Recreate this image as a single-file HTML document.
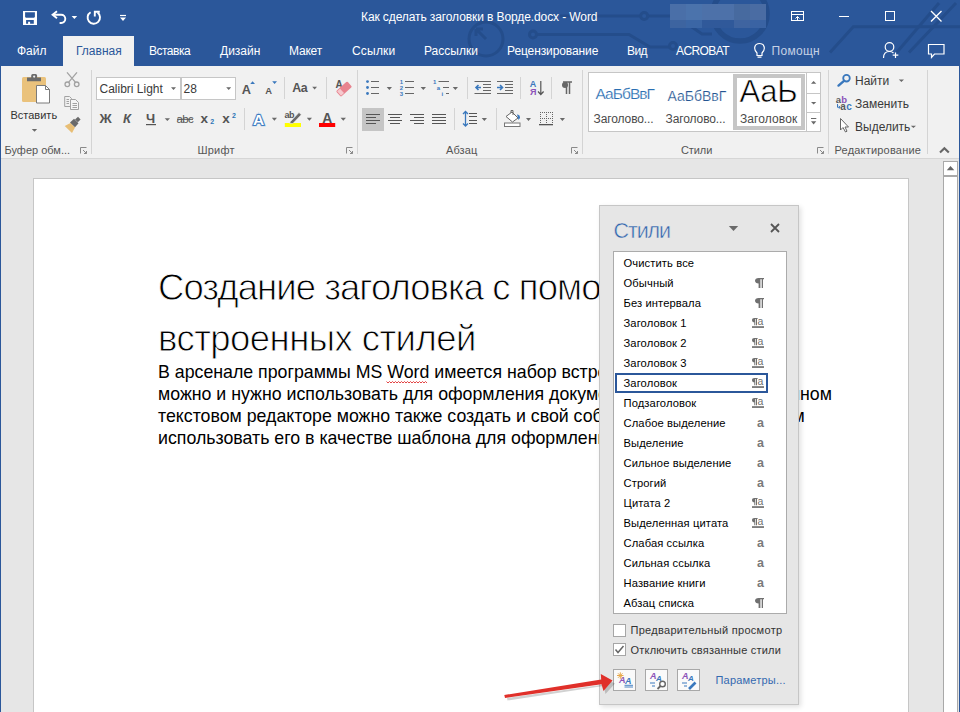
<!DOCTYPE html>
<html><head><meta charset="utf-8">
<style>
*{margin:0;padding:0;box-sizing:border-box}
html,body{width:960px;height:712px;overflow:hidden;background:#e6e6e6;font-family:"Liberation Sans",sans-serif}
.a{position:absolute;white-space:nowrap;line-height:1}
svg{position:absolute;overflow:visible}
.tab{color:#fff;font-size:12px;top:45px}
.lbl{color:#555;font-size:11px;top:144px}
.rt{color:#3a3a3a;font-size:12px}
.it{left:623.5px;font-size:11.2px;color:#000;letter-spacing:0.1px}
</style></head><body>
<!-- title + tabs background -->
<div class="a" style="left:0;top:0;width:960px;height:66px;background:#2b579a"></div>
<svg style="left:0;top:0" width="960" height="66" viewBox="0 0 960 66">
 <g fill="none" stroke="#244d8b" stroke-width="3">
  <circle cx="486" cy="39" r="17"/>
  <path d="M486 39 L476 29 M476 29 h7 M476 29 v7"/>
  <path d="M536.5 34.5 H629 L650 47 H669.5"/>
  <circle cx="533" cy="34.5" r="3.5"/>
  <circle cx="673" cy="46" r="3.5"/>
  <path d="M560 16 H640.7 M647.7 16 H676 L702 34 H712"/>
  <circle cx="644.2" cy="16" r="3.5"/>
  <circle cx="740" cy="14" r="27" stroke-width="5.5"/>
  <path d="M830 52.5 L853.3 26.7 H960"/>
  <path d="M896.7 52.5 L939 3"/>
  <path d="M909 52.5 L956 3"/>
 </g>
</svg>
<!-- blurred user name -->
<div class="a" style="left:670px;top:4px;width:16px;height:16px;background:#4a6fa8"></div><div class="a" style="left:670px;top:20px;width:16px;height:8px;background:#3d64a0"></div>
<div class="a" style="left:686px;top:4px;width:16px;height:16px;background:#4b73ac"></div><div class="a" style="left:686px;top:20px;width:16px;height:8px;background:#3b66a5"></div>
<div class="a" style="left:702px;top:4px;width:32px;height:16px;background:#4d71a9"></div><div class="a" style="left:702px;top:20px;width:32px;height:8px;background:#30599a"></div>
<div class="a" style="left:734px;top:4px;width:16px;height:16px;background:#476a9f"></div><div class="a" style="left:734px;top:20px;width:16px;height:8px;background:#3f64a0"></div>
<div class="a" style="left:750px;top:4px;width:16px;height:16px;background:#4a6ca3"></div><div class="a" style="left:750px;top:20px;width:16px;height:8px;background:#3a63a3"></div>
<div class="a" style="left:361px;top:11px;font-size:12px;color:#fff;letter-spacing:-0.1px">Как сделать заголовки в Ворде.docx - Word</div>
<!-- QAT -->
<svg style="left:0;top:0" width="140" height="36" viewBox="0 0 140 36">
 <path fill="#fff" fill-rule="evenodd" d="M23 11 H37 V25 H23 Z M25.1 12.2 H34.9 V16.9 L34 17.8 H26 L25.1 16.9 Z M26.1 20 H33.8 V23.7 H30.1 V21.8 H28.1 V23.7 H26.1 Z"/>
 <g fill="none" stroke="#fff" stroke-width="1.9">
  <path d="M53.5 14.75 H61.2 A4.1 4.1 0 0 1 61.2 22.95 H59.6"/>
  <path d="M57 11.3 L52.6 14.75 L57 18.2"/>
  <path d="M90.6 12.2 A6.2 6.2 0 1 0 97.6 12.6"/>
  <path d="M99.8 11.7 H94.8 V16.6"/>
  <path d="M120 15.5 H126" stroke-width="1.2"/>
 </g>
 <path d="M71.6 15.9 H77.2 L74.4 19.1 Z M120 17.5 H126 L123 21 Z" fill="#fff"/>
</svg>
<!-- window controls -->
<svg style="left:780px;top:0" width="180" height="36" viewBox="780 0 180 36">
 <g fill="none" stroke="#fff" stroke-width="1">
  <rect x="791.5" y="11.5" width="12" height="9"/>
  <path d="M791.5 14.5 H803.5 M797.5 20.5 V16.5 M795.5 18.5 L797.5 16.5 L799.5 18.5"/>
  <path d="M839 16.5 H849"/>
  <rect x="885.5" y="11.5" width="9" height="9"/>
  <path d="M931 11 L941.5 21.5 M941.5 11 L931 21.5" stroke-width="1.35"/>
 </g>
</svg>

<!-- tabs -->
<div class="a" style="left:63px;top:36px;width:71px;height:31px;background:#f1f1f1"></div>
<div class="a tab" style="left:17px">Файл</div>
<div class="a tab" style="left:76px;color:#2b579a">Главная</div>
<div class="a tab" style="left:149px;letter-spacing:-0.5px">Вставка</div>
<div class="a tab" style="left:220px">Дизайн</div>
<div class="a tab" style="left:289px;letter-spacing:-0.2px">Макет</div>
<div class="a tab" style="left:352px;letter-spacing:0.2px">Ссылки</div>
<div class="a tab" style="left:424px">Рассылки</div>
<div class="a tab" style="left:507px;letter-spacing:-0.1px">Рецензирование</div>
<div class="a tab" style="left:627px;letter-spacing:-0.6px">Вид</div>
<div class="a tab" style="left:676px;letter-spacing:-0.6px">ACROBAT</div>
<div class="a tab" style="left:771.5px;color:#c5d1e5;letter-spacing:0.3px">Помощн</div>
<svg style="left:740px;top:36px" width="220" height="30" viewBox="740 36 220 30">
 <g fill="none" stroke="#fff" stroke-width="1.2">
  <path d="M757 53 C753 49 754.5 43.5 759.5 43.5 C764.5 43.5 766 49 762 53 V55.5 H757 Z M757.5 57.2 H761.5"/>
  <circle cx="889.5" cy="47" r="4.3"/>
  <path d="M883.5 58 C883.5 53 886 51.5 889.5 51.5 C891 51.5 892.5 52 893.5 53 M895.5 52.5 V58 M892.7 55.2 H898.3"/>
  <path d="M928.5 44.5 H944 V54 H934.5 L931.5 57.5 V54 H928.5 Z"/>
 </g>
</svg>

<!-- ribbon -->
<div id="ribbon" class="a" style="left:1px;top:66px;width:958px;height:93px;background:#f1f1f1;border-bottom:1px solid #d6d6d6"></div>
<div class="a" style="left:0;top:66px;width:1px;height:646px;background:#2b579a"></div>
<div class="a" style="left:959px;top:66px;width:1px;height:646px;background:#2b579a"></div>


<!-- ribbon icons -->
<svg style="left:0;top:66px" width="960" height="94" viewBox="0 66 960 94">
 <g fill="#d4d4d4">
  <rect x="91" y="70" width="1" height="84"/>
  <rect x="357" y="70" width="1" height="84"/>
  <rect x="582" y="70" width="1" height="84"/>
  <rect x="828" y="70" width="1" height="84"/>
  <rect x="927" y="70" width="1" height="84"/>
  <rect x="284" y="77" width="1" height="22"/>
  <rect x="326" y="77" width="1" height="22"/>
  <rect x="244" y="108" width="1" height="22"/>
  <rect x="467" y="77" width="1" height="22"/>
  <rect x="520" y="77" width="1" height="22"/>
  <rect x="551" y="77" width="1" height="22"/>
  <rect x="454" y="108" width="1" height="22"/>
  <rect x="496" y="108" width="1" height="22"/>
 </g>
 <!-- clipboard -->
 <rect x="22" y="77" width="24" height="25" rx="1.5" fill="#eac27c"/>
 <path d="M27 81.3 V77.5 H31.2 V75.5 Q31.2 74 32.7 74 H35.6 Q37.1 74 37.1 75.5 V77.5 H41 V81.3 Z" fill="#6b6b6b"/><circle cx="34.15" cy="76.6" r="1.1" fill="#f1f1f1"/>
 <path d="M36.5 85.5 H45.5 L49.5 89.5 V103 H36.5 Z" fill="#fff" stroke="#7b7b7b" stroke-width="1"/>
 <path d="M45.5 85.5 V89.5 H49.5" fill="none" stroke="#7b7b7b" stroke-width="1"/>
 <path d="M31.8 129 H37.2 L34.5 131.8 Z" fill="#6a6a6a"/>
 <g fill="none" stroke="#a2a2a2" stroke-width="1.3">
  <circle cx="67.3" cy="84.3" r="2.3"/><circle cx="76.7" cy="84.3" r="2.3"/>
  <path d="M68.5 82.3 L77 72.3 M75.5 82.3 L67 72.3"/>
  <path d="M64.7 96.5 H69.5 L71.5 98.5 V106.5 H64.7 Z" fill="#f1f1f1" stroke-width="1"/>
  <path d="M70.5 99.5 H75.5 L78.5 102.5 V109.5 H70.5 Z" fill="#f5f5f5" stroke-width="1"/>
  <path d="M66.5 99.5 H69 M66.5 101.5 H69 M66.5 103.5 H69 M72.5 103.5 H77 M72.5 105.5 H77 M72.5 107.5 H77" stroke-width="1"/>
 </g>
 <path d="M64.7 126 L70.5 123 L75 127.5 L72 133 Z" fill="#e8be75"/>
 <path d="M70 122.5 L74 118.8 L78.5 123.3 L75 127.3 Z" fill="#6a6a6a"/><path d="M75 119.5 L78 116.8 L80.6 119.4 L77.8 122.2 Z" fill="#6a6a6a"/>
 <!-- launchers -->
 <g fill="none" stroke="#8a8a8a" stroke-width="1">
  <path d="M80.5 153.5 V147.5 H86.5 M83 150 L86.5 153.5 M86.5 151 V153.5 H84"/>
  <path d="M346.5 153.5 V147.5 H352.5 M349 150 L352.5 153.5 M352.5 151 V153.5 H350"/>
  <path d="M571.5 153.5 V147.5 H577.5 M574 150 L577.5 153.5 M577.5 151 V153.5 H575"/>
  <path d="M817.5 153.5 V147.5 H823.5 M820 150 L823.5 153.5 M823.5 151 V153.5 H821"/>
 </g>
 <path d="M940 152.6 L944.4 148.2 L948.8 152.6" fill="none" stroke="#666" stroke-width="2.1"/>
 <!-- font group -->
 <rect x="96.5" y="77.5" width="84" height="22" fill="#fff" stroke="#c6c6c6"/>
 <rect x="181.5" y="77.5" width="54" height="22" fill="#fff" stroke="#c6c6c6"/>
 <g fill="#6a6a6a">
  <path d="M171 87.2 H176 L173.5 90 Z M226.2 87.2 H231.2 L228.7 90 Z"/>
  <path d="M164.7 118.3 H170 L167.35 121 Z"/>
  <path d="M312.2 86.8 H317 L314.6 89.6 Z"/>
  <path d="M271.8 117.8 H277 L274.4 120.8 Z M306.8 117.8 H312 L309.4 120.8 Z M340.6 117.8 H346 L343.3 120.8 Z"/>
 </g>
 <path d="M250.2 84 L252.6 81.2 L255 84 Z M272.2 81.2 H277 L274.6 84 Z" fill="#3a78bd"/>
 <g font-family="Liberation Sans" fill="#555">
  <text x="99.5" y="123" font-size="13.5" font-weight="bold">Ж</text>
  <text x="123" y="123" font-size="13" font-weight="bold" font-style="italic">К</text>
  <text x="146" y="122.5" font-size="13" font-weight="bold">Ч</text>
  <text x="176.5" y="122.5" font-size="11.5" letter-spacing="-0.6">abc</text>
  <text x="200.5" y="123" font-size="13.5" font-weight="bold">x</text>
  <text x="222.3" y="123" font-size="13.5" font-weight="bold">x</text>
  <text x="241.8" y="93.8" font-size="12.8" font-weight="bold">A</text>
  <text x="265.2" y="93.8" font-size="9.4" font-weight="bold">A</text>
  <text x="292.2" y="92" font-size="12.4" font-weight="bold" letter-spacing="-0.3">Aa</text>
  <text x="335.5" y="88.3" font-size="10" font-weight="bold">A</text>
  <text x="322.2" y="122.9" font-size="13.8" font-weight="bold">A</text>
  <text x="284.5" y="118.2" font-size="9" font-weight="bold" letter-spacing="-0.4">ab</text>
 </g>
 <rect x="146" y="124" width="10" height="1.2" fill="#555"/>
 <rect x="177" y="118.8" width="16" height="1" fill="#555"/>
 <text x="210.3" y="124.3" font-size="7" font-family="Liberation Sans" font-weight="bold" fill="#2e75b6">2</text>
 <text x="232" y="117.5" font-size="7" font-family="Liberation Sans" font-weight="bold" fill="#2e75b6">2</text>
 <g transform="rotate(-42 344 89)"><rect x="336.5" y="85.3" width="15" height="7.5" rx="1.2" fill="#e8838f"/><rect x="337.3" y="86.1" width="4" height="5.9" fill="#f6c9ce"/></g>
 <text x="253" y="124.5" font-size="15.5" font-family="Liberation Sans" font-weight="bold" fill="#fff" stroke="#9cc0e6" stroke-width="2.6" paint-order="stroke">A</text><text x="253" y="124.5" font-size="15.5" font-family="Liberation Sans" font-weight="bold" fill="#fff" stroke="#2e6fb8" stroke-width="1.6" paint-order="stroke">A</text>
 <rect x="284.8" y="123" width="16.2" height="4" fill="#ffff00"/>
 <path d="M290.5 121.5 L299 112.5 L301.3 114.8 L292.8 123.6 L289.6 123.3 Z" fill="#6a6a6a" stroke="#f1f1f1" stroke-width="0.6"/>
 <rect x="319" y="123" width="16.2" height="4" fill="#ff0000"/>
 <!-- paragraph -->
 <g fill="#3a78bd">
  <circle cx="367.5" cy="81.6" r="1.4"/><circle cx="367.5" cy="87.5" r="1.4"/><circle cx="367.5" cy="93.5" r="1.4"/>
 </g>
 <g stroke="#666" stroke-width="1" fill="none">
  <path d="M371 81.5 H379 M371 87.5 H379 M371 93.5 H379"/>
  <path d="M405 81.5 H414 M405 87.5 H414 M405 93.5 H414"/>
  <path d="M438.5 81.5 H449 M443 87.5 H449 M446 93.5 H449"/>
 </g>
 <g font-family="Liberation Sans" font-size="6" font-weight="bold" fill="#3a78bd">
  <text x="399.8" y="84">1</text><text x="399.8" y="90">2</text><text x="399.8" y="96">3</text>
  <text x="433" y="84">1</text><text x="436.8" y="90">a</text><text x="441.5" y="96">i</text>
 </g>
 <g fill="#6a6a6a">
  <path d="M386.7 87 H392 L389.35 90 Z M420.6 87 H426 L423.3 90 Z M452.7 87 H458 L455.35 90 Z"/>
  <path d="M481.7 118 H487 L484.35 121 Z M526 118 H531 L528.5 121 Z M559.8 118 H565 L562.4 121 Z"/>
 </g>
 <rect x="362" y="108" width="22" height="23" fill="#c5c5c5"/>
 <g stroke="#555" stroke-width="1" fill="none">
  <path d="M366 114.5 H380 M366 117.5 H376 M366 120.5 H380 M366 123.5 H376"/>
  <path d="M388 114.5 H402 M390 117.5 H400 M388 120.5 H402 M390 123.5 H400"/>
  <path d="M410 114.5 H424 M414 117.5 H424 M410 120.5 H424 M414 123.5 H424"/>
  <path d="M432 114.5 H446 M432 117.5 H446 M432 120.5 H446 M432 123.5 H446"/>
  <path d="M469 113.5 H477 M469 116.5 H477 M469 120.5 H477 M469 123.5 H477"/>
 </g>
 <path d="M465.5 111.5 V126 M463 114 L465.5 111.5 L468 114 M463 123.5 L465.5 126 L468 123.5" stroke="#3a78bd" stroke-width="1.3" fill="none"/>
 <g stroke="#666" stroke-width="1.1" fill="none">
  <path d="M474.5 81.5 H491 M483 84.5 H491 M483 87.5 H491 M483 90.5 H491 M474.5 93.5 H491"/>
  <path d="M497 81.5 H513 M505 84.5 H513 M505 87.5 H513 M505 90.5 H513 M497 93.5 H513"/>
 </g>
 <path d="M481 87.5 H476 M478.5 85 L476 87.5 L478.5 90 M497 87.5 H502.5 M500 85 L502.5 87.5 L500 90" stroke="#3a78bd" stroke-width="1.6" fill="none"/>
 <text x="529.7" y="86.6" font-size="9" font-family="Liberation Sans" font-weight="bold" fill="#3a78bd">A</text>
 <text x="530" y="95" font-size="9" font-family="Liberation Sans" font-weight="bold" fill="#8c52b8">Я</text>
 <path d="M540.8 81 V94.5 M538 91.5 L540.8 94.5 L543.6 91.5" stroke="#555" stroke-width="1.2" fill="none"/>
 <path d="M563 82 H572 M566.5 82 V94 M569.5 82 V94" stroke="#666" stroke-width="1.5" fill="none"/>
 <circle cx="565" cy="85" r="3" fill="#666"/>
 <rect x="504.5" y="123" width="15.5" height="3.5" fill="#fff" stroke="#777" stroke-width="1"/>
 <path d="M512 112 L518 118 L512.5 122 L506 116.5 Z" fill="#fff" stroke="#666" stroke-width="1"/>
 <path d="M511 113 V110.5 H513 V115" stroke="#666" stroke-width="1" fill="none"/>
 <path d="M517 114.5 A3 3 0 0 1 520 118 L518.5 120 Z" fill="#3a78bd"/>
 <g fill="#666"><rect x="540" y="112" width="1" height="1"/><rect x="540" y="118" width="1" height="1"/><rect x="542" y="112" width="1" height="1"/><rect x="542" y="118" width="1" height="1"/><rect x="544" y="112" width="1" height="1"/><rect x="544" y="118" width="1" height="1"/><rect x="546" y="112" width="1" height="1"/><rect x="546" y="118" width="1" height="1"/><rect x="548" y="112" width="1" height="1"/><rect x="548" y="118" width="1" height="1"/><rect x="550" y="112" width="1" height="1"/><rect x="550" y="118" width="1" height="1"/><rect x="552" y="112" width="1" height="1"/><rect x="552" y="118" width="1" height="1"/><rect x="540" y="112" width="1" height="1"/><rect x="546" y="112" width="1" height="1"/><rect x="552" y="112" width="1" height="1"/><rect x="540" y="114" width="1" height="1"/><rect x="546" y="114" width="1" height="1"/><rect x="552" y="114" width="1" height="1"/><rect x="540" y="116" width="1" height="1"/><rect x="546" y="116" width="1" height="1"/><rect x="552" y="116" width="1" height="1"/><rect x="540" y="118" width="1" height="1"/><rect x="546" y="118" width="1" height="1"/><rect x="552" y="118" width="1" height="1"/><rect x="540" y="120" width="1" height="1"/><rect x="546" y="120" width="1" height="1"/><rect x="552" y="120" width="1" height="1"/><rect x="540" y="122" width="1" height="1"/><rect x="546" y="122" width="1" height="1"/><rect x="552" y="122" width="1" height="1"/></g>
 <rect x="539" y="124" width="14" height="1.3" fill="#555"/>
 <!-- styles gallery -->
 <rect x="588.5" y="72.5" width="218" height="59" fill="#fff" stroke="#c6c6c6"/>
 <rect x="735" y="76" width="68" height="52" fill="none" stroke="#c6c6c6" stroke-width="4"/>
 <rect x="806.5" y="72.5" width="14" height="59" fill="#fff" stroke="#c6c6c6"/>
 <path d="M806.5 93.5 H820.5 M806.5 112.5 H820.5" stroke="#c6c6c6"/>
 <g fill="#6a6a6a">
  <path d="M811 83.8 L813.6 81 L816.3 83.8 Z M811 101.9 H816.3 L813.6 104.6 Z M811 121.2 H816.3 L813.6 124.4 Z"/>
  <rect x="811" y="118" width="5.3" height="1"/>
 </g>
 <!-- editing -->
 <circle cx="846.5" cy="78.2" r="3.3" fill="none" stroke="#3a78bd" stroke-width="1.8"/>
 <path d="M844 80.8 L838.5 85.6" stroke="#3a78bd" stroke-width="2.4" stroke-linecap="round"/>
 <path d="M898.8 79.4 H904 L901.4 82 Z M910.8 125.8 H916 L913.4 128 Z" fill="#6a6a6a"/>
  <g font-family="Liberation Sans" font-weight="bold" font-size="9.5">
 <text x="835.8" y="102.5" fill="#5a5a5a">a</text>
 <text x="841.3" y="102.5" fill="#8c52b8">b</text>
 <text x="840.3" y="109.8" fill="#5a5a5a" font-size="10">a</text>
 <text x="846.2" y="109.8" fill="#3a78bd" font-size="10">c</text>
 </g>
 <path d="M837.5 104 V107.3 H840 M838.8 106 L840.3 107.3 L838.8 108.6" stroke="#3a78bd" stroke-width="1" fill="none"/>
 <path d="M840.5 118.5 V130 L843 127.5 L845.5 132 L847 131.2 L845 127 H848.5 Z" fill="#fff" stroke="#666" stroke-width="1"/>
</svg>
<!-- ribbon text -->
<div class="a" style="left:10.5px;top:109.5px;font-size:11px;color:#333">Вставить</div>
<div class="a lbl" style="left:4.5px;top:145px;color:#555">Буфер обм...</div>
<div class="a lbl" style="left:197.5px;top:145px;letter-spacing:0.2px">Шрифт</div>
<div class="a lbl" style="left:446px;top:145px;letter-spacing:0.1px">Абзац</div>
<div class="a lbl" style="left:681px;top:145px;letter-spacing:-0.1px">Стили</div>
<div class="a lbl" style="left:834.5px;top:145px;letter-spacing:0.2px">Редактирование</div>
<div class="a rt" style="left:99.5px;top:82.7px">Calibri Light</div>
<div class="a rt" style="left:183.5px;top:82.7px">28</div>
<div class="a" style="left:595.5px;top:86px;font-size:15.5px;color:#2a6fb2;letter-spacing:-0.95px;-webkit-text-stroke:0.2px #fff">АаБбВвГ</div>
<div class="a" style="left:667.5px;top:88.5px;font-size:14px;color:#245592;letter-spacing:0px;-webkit-text-stroke:0.2px #fff">АаБбВвГ</div>
<div class="a rt" style="left:593.5px;top:112.5px;color:#4a4a4a;letter-spacing:-0.1px">Заголово...</div>
<div class="a rt" style="left:665.5px;top:112.5px;color:#4a4a4a;letter-spacing:-0.1px">Заголово...</div>
<div class="a rt" style="left:740px;top:112.5px;color:#4a4a4a;letter-spacing:0.1px">Заголовок</div>
<div class="a" style="left:739.5px;top:75.5px;font-size:31px;color:#000;letter-spacing:-0.2px;-webkit-text-stroke:0.6px #fff">АаЬ</div>
<div class="a rt" style="left:855px;top:75px">Найти</div>
<div class="a rt" style="left:855px;top:97.5px">Заменить</div>
<div class="a rt" style="left:855px;top:120.5px">Выделить</div>

<!-- document -->
<div class="a" style="left:33px;top:178px;width:876px;height:560px;background:#fff;border:1px solid #c6c6c6"></div>
<div class="a" style="left:943px;top:161px;width:15px;height:551px;background:#fff;border:1px solid #a9a9a9;border-bottom:none"></div>
<div class="a" style="left:943px;top:175px;width:15px;height:2px;background:#a9a9a9"></div>
<svg style="left:940px;top:160px" width="20" height="20" viewBox="940 160 20 20"><path d="M946.8 170.2 L950.5 166 L954.3 170.2 Z" fill="#666"/></svg>
<div class="a" style="left:158px;top:269.7px;font-size:36.5px;color:#000;letter-spacing:-0.95px;-webkit-text-stroke:0.9px #fff">Создание заголовка с помощью</div>
<div class="a" style="left:158px;top:321px;font-size:36.5px;color:#000;letter-spacing:-0.55px;-webkit-text-stroke:0.9px #fff">встроенных стилей</div>
<div class="a" style="left:158px;top:361px;font-size:17.75px;line-height:22px;color:#000">В арсенале программы MS Word имеется набор встроенных стилей, которые<br>можно и нужно использовать для оформления документов. Кроме того, в данном<br>текстовом редакторе можно также создать и свой собственный стиль, а затем<br>использовать его в качестве шаблона для оформления заголовков.</div>

<svg style="left:380px;top:378px" width="60" height="8" viewBox="380 378 60 8"><path d="M386.5 381.5 l1.5 1.5 l1.5 -1.5 l1.5 1.5 l1.5 -1.5 l1.5 1.5 l1.5 -1.5 l1.5 1.5 l1.5 -1.5 l1.5 1.5 l1.5 -1.5 l1.5 1.5 l1.5 -1.5 l1.5 1.5 l1.5 -1.5 l1.5 1.5 l1.5 -1.5 l1.5 1.5 l1.5 -1.5 l1.5 1.5 l1.5 -1.5 l1.5 1.5 l1.5 -1.5 l1.5 1.5 l1.5 -1.5 l1.5 1.5 l1.5 -1.5 l1.5 1.5" fill="none" stroke="#e03030" stroke-width="0.9"/></svg>
<!-- styles pane -->
<div class="a" style="left:599px;top:205px;width:200px;height:500px;background:#e6e6e6;border:1px solid #c6c6c6;box-shadow:2px 2px 5px rgba(0,0,0,0.12)"></div>
<div class="a" style="left:613px;top:251px;width:174px;height:363px;background:#fff;border:1px solid #ababab"></div>

<div class="a" style="left:613.5px;top:220.5px;font-size:21.5px;color:#2f64ad;letter-spacing:-1.1px;-webkit-text-stroke:0.45px #e6e6e6">Стили</div>
<svg style="left:720px;top:215px" width="70" height="25" viewBox="720 215 70 25">
 <path d="M728.8 226 H738.2 L733.5 231 Z" fill="#6a6a6a"/>
 <path d="M771 224 L779 232 M779 224 L771 232" stroke="#555" stroke-width="1.8"/>
</svg>
<div class="a it" style="top:257.9px">Очистить все</div>
<div class="a it" style="top:277.9px">Обычный</div>
<div class="a it" style="top:297.9px">Без интервала</div>
<div class="a it" style="top:317.9px">Заголовок 1</div>
<div class="a it" style="top:337.9px">Заголовок 2</div>
<div class="a it" style="top:357.9px">Заголовок 3</div>
<div class="a it" style="top:377.9px">Заголовок</div>
<div class="a it" style="top:397.9px">Подзаголовок</div>
<div class="a it" style="top:417.9px">Слабое выделение</div>
<div class="a it" style="top:437.9px">Выделение</div>
<div class="a it" style="top:457.9px">Сильное выделение</div>
<div class="a it" style="top:477.9px">Строгий</div>
<div class="a it" style="top:497.9px">Цитата 2</div>
<div class="a it" style="top:517.9px">Выделенная цитата</div>
<div class="a it" style="top:537.9px">Слабая ссылка</div>
<div class="a it" style="top:557.9px">Сильная ссылка</div>
<div class="a it" style="top:577.9px">Название книги</div>
<div class="a it" style="top:597.9px">Абзац списка</div>
<svg style="left:740px;top:250px" width="40" height="370" viewBox="740 250 40 370"><g fill="#707070" font-family="Liberation Sans">
<path transform="translate(0 0)" d="M758.6 278 H764 V279.2 H763 V288 H761.7 V279.2 H760.4 V288 H758.6 V283.6 C756.4 283.6 755 282.4 755 280.8 C755 279.1 756.4 278 758.6 278 Z"/>
<path transform="translate(0 20)" d="M758.6 278 H764 V279.2 H763 V288 H761.7 V279.2 H760.4 V288 H758.6 V283.6 C756.4 283.6 755 282.4 755 280.8 C755 279.1 756.4 278 758.6 278 Z"/>
<g transform="translate(0 0)"><path d="M754.3 318 H757.6 V319 H757 V325.2 H756 V319 H755.3 V325.2 H754.3 V322.3 C752.9 322.3 752 321.4 752 320.2 C752 318.9 752.9 318 754.3 318 Z"/><text x="757.6" y="325.2" font-size="10.5">a</text><rect x="752" y="326.2" width="12" height="1.7"/></g>
<g transform="translate(0 20)"><path d="M754.3 318 H757.6 V319 H757 V325.2 H756 V319 H755.3 V325.2 H754.3 V322.3 C752.9 322.3 752 321.4 752 320.2 C752 318.9 752.9 318 754.3 318 Z"/><text x="757.6" y="325.2" font-size="10.5">a</text><rect x="752" y="326.2" width="12" height="1.7"/></g>
<g transform="translate(0 40)"><path d="M754.3 318 H757.6 V319 H757 V325.2 H756 V319 H755.3 V325.2 H754.3 V322.3 C752.9 322.3 752 321.4 752 320.2 C752 318.9 752.9 318 754.3 318 Z"/><text x="757.6" y="325.2" font-size="10.5">a</text><rect x="752" y="326.2" width="12" height="1.7"/></g>
<g transform="translate(0 60)"><path d="M754.3 318 H757.6 V319 H757 V325.2 H756 V319 H755.3 V325.2 H754.3 V322.3 C752.9 322.3 752 321.4 752 320.2 C752 318.9 752.9 318 754.3 318 Z"/><text x="757.6" y="325.2" font-size="10.5">a</text><rect x="752" y="326.2" width="12" height="1.7"/></g>
<g transform="translate(0 80)"><path d="M754.3 318 H757.6 V319 H757 V325.2 H756 V319 H755.3 V325.2 H754.3 V322.3 C752.9 322.3 752 321.4 752 320.2 C752 318.9 752.9 318 754.3 318 Z"/><text x="757.6" y="325.2" font-size="10.5">a</text><rect x="752" y="326.2" width="12" height="1.7"/></g>
<text x="757" y="426.6" font-size="12.5" font-weight="bold" fill="#7a7a7a">a</text>
<text x="757" y="446.6" font-size="12.5" font-weight="bold" fill="#7a7a7a">a</text>
<text x="757" y="466.6" font-size="12.5" font-weight="bold" fill="#7a7a7a">a</text>
<text x="757" y="486.6" font-size="12.5" font-weight="bold" fill="#7a7a7a">a</text>
<g transform="translate(0 180)"><path d="M754.3 318 H757.6 V319 H757 V325.2 H756 V319 H755.3 V325.2 H754.3 V322.3 C752.9 322.3 752 321.4 752 320.2 C752 318.9 752.9 318 754.3 318 Z"/><text x="757.6" y="325.2" font-size="10.5">a</text><rect x="752" y="326.2" width="12" height="1.7"/></g>
<g transform="translate(0 200)"><path d="M754.3 318 H757.6 V319 H757 V325.2 H756 V319 H755.3 V325.2 H754.3 V322.3 C752.9 322.3 752 321.4 752 320.2 C752 318.9 752.9 318 754.3 318 Z"/><text x="757.6" y="325.2" font-size="10.5">a</text><rect x="752" y="326.2" width="12" height="1.7"/></g>
<text x="757" y="546.6" font-size="12.5" font-weight="bold" fill="#7a7a7a">a</text>
<text x="757" y="566.6" font-size="12.5" font-weight="bold" fill="#7a7a7a">a</text>
<text x="757" y="586.6" font-size="12.5" font-weight="bold" fill="#7a7a7a">a</text>
<path transform="translate(0 320)" d="M758.6 278 H764 V279.2 H763 V288 H761.7 V279.2 H760.4 V288 H758.6 V283.6 C756.4 283.6 755 282.4 755 280.8 C755 279.1 756.4 278 758.6 278 Z"/>
</g></svg>
<div class="a" style="left:615px;top:373px;width:153px;height:20px;border:2px solid #2b579a"></div>
<div class="a" style="left:613px;top:624px;width:13px;height:13px;background:#fff;border:1px solid #a6a6a6"></div>
<div class="a" style="left:613px;top:643px;width:13px;height:13px;background:#fff;border:1px solid #a6a6a6"></div>
<svg style="left:613px;top:643px" width="13" height="13" viewBox="0 0 13 13"><path d="M2.5 6.5 L5 9.5 L10.5 3" fill="none" stroke="#666" stroke-width="1.5"/></svg>
<div class="a" style="left:630.5px;top:625.4px;font-size:11px;color:#333;letter-spacing:0.3px">Предварительный просмотр</div>
<div class="a" style="left:630.5px;top:644.5px;font-size:11px;color:#333;letter-spacing:0.2px">Отключить связанные стили</div>
<div class="a" style="left:613px;top:669px;width:23px;height:22px;background:#fafafa;border:1px solid #a8a8a8"></div>
<div class="a" style="left:645px;top:669px;width:23px;height:22px;background:#fafafa;border:1px solid #a8a8a8"></div>
<div class="a" style="left:677px;top:669px;width:23px;height:22px;background:#fafafa;border:1px solid #a8a8a8"></div>
<svg style="left:600px;top:660px" width="110" height="40" viewBox="600 660 110 40">
 <g font-family="Liberation Sans" font-style="italic" font-weight="bold">
  <text x="619" y="682.5" font-size="9" fill="#8c52b8">A</text>
  <text x="625" y="684" font-size="9" fill="#3a78bd">A</text>
  <text x="650" y="679" font-size="9" fill="#8c52b8">A</text>
  <text x="656" y="681" font-size="8" fill="#3a78bd">A</text>
  <text x="682" y="679" font-size="9" fill="#8c52b8">A</text>
  <text x="688" y="681" font-size="8" fill="#3a78bd">A</text>
 </g>
 <g stroke="#e8a94c" stroke-width="1"><path d="M620.3 672.3 V678.8 M617 675.5 H623.5 M618 673.3 L622.5 677.8 M622.5 673.3 L618 677.8"/></g>
 <path d="M624.5 685.3 H633 M624.5 687 H633" stroke="#3a78bd" stroke-width="0.9"/>
 <path d="M650 683 H655 M652 686 H655" stroke="#3a78bd" stroke-width="1"/>
 <circle cx="662.5" cy="684" r="2.8" fill="#fff" stroke="#666" stroke-width="1.4"/>
 <path d="M660.5 686 L657.5 689" stroke="#666" stroke-width="1.8"/>
 <path d="M682 683 H687 M684 686 H687" stroke="#3a78bd" stroke-width="1"/>
 <path d="M689 689 L695.5 682.5" stroke="#3a78bd" stroke-width="2.6"/>
</svg>
<div class="a" style="left:715.5px;top:675px;font-size:11px;color:#3469b0;letter-spacing:0.2px">Параметры...</div>
<!-- red arrow -->
<svg style="left:0;top:0" width="960" height="712" viewBox="0 0 960 712">
 <path d="M506 699 L602 684.5 L604 692.5 L613.5 682 L601 676 L602.5 683 L505.5 696.5 Z" fill="#000" opacity="0.18" transform="translate(1.5,1.5)"/>
 <path d="M505 698 L601.5 684.3 L603.5 691 L612.5 680.6 L600.8 674 L601.2 679.5 L504.3 695 Z" fill="#e0302a"/>
</svg>
</body></html>
